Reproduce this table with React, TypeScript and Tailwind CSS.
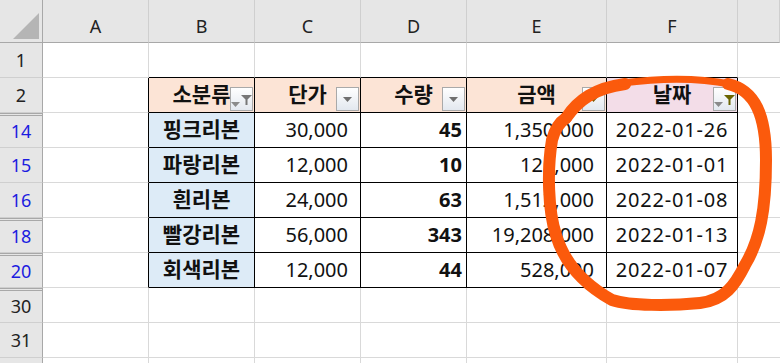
import React from "react";

type Row = { n: string; blue?: boolean; gapAbove?: boolean; data?: string[] };

const rows: Row[] = [
  { n: "1" },
  { n: "2" },
  { n: "14", blue: true, gapAbove: true, data: ["핑크리본", "30,000", "45", "1,350,000", "2022-01-26"] },
  { n: "15", blue: true, data: ["파랑리본", "12,000", "10", "120,000", "2022-01-01"] },
  { n: "16", blue: true, data: ["흰리본", "24,000", "63", "1,512,000", "2022-01-08"] },
  { n: "18", blue: true, gapAbove: true, data: ["빨강리본", "56,000", "343", "19,208,000", "2022-01-13"] },
  { n: "20", blue: true, gapAbove: true, data: ["회색리본", "12,000", "44", "528,000", "2022-01-07"] },
  { n: "30", gapAbove: true },
  { n: "31" },
  { n: "" },
];

const letters = ["A", "B", "C", "D", "E", "F", ""];

function Triangle({ color }: { color: string }) {
  return (
    <svg width="9" height="5" viewBox="0 0 9 5">
      <path d="M0 0H9L4.5 5Z" fill={color} />
    </svg>
  );
}

function Funnel({ color }: { color: string }) {
  return (
    <svg width="11" height="10" viewBox="0 0 11 10">
      <path d="M0 0H11L6.5 4.5V10H4.5V4.5Z" fill={color} />
    </svg>
  );
}

function FilterButton({ kind }: { kind: "plain" | "sorted" | "filtered" | "filteredGrey" }) {
  return (
    <div className="absolute right-[1px] bottom-[1px] flex h-[24px] w-[23px] items-center justify-center border border-[#a9a9a9] bg-gradient-to-b from-white to-[#e3e8ef]">
      {kind === "plain" && <Triangle color="#6f6f6f" />}
      {kind === "sorted" && <Triangle color="#7a5a00" />}
      {kind === "filtered" && (
        <div className="flex items-end gap-[1px] pt-[2px]">
          <div className="mb-[-2px]">
            <Triangle color="#8a8a8a" />
          </div>
          <Funnel color="#6a6400" />
        </div>
      )}
      {kind === "filteredGrey" && (
        <div className="flex items-end gap-[1px] pt-[2px]">
          <div className="mb-[-2px]">
            <Triangle color="#8a8a8a" />
          </div>
          <Funnel color="#777777" />
        </div>
      )}
    </div>
  );
}

const headers: { label: string; bg: string; btn: "plain" | "sorted" | "filtered" | "filteredGrey" }[] = [
  { label: "소분류", bg: "bg-[#fce4d6]", btn: "filteredGrey" },
  { label: "단가", bg: "bg-[#fce4d6]", btn: "plain" },
  { label: "수량", bg: "bg-[#fce4d6]", btn: "plain" },
  { label: "금액", bg: "bg-[#fce4d6]", btn: "sorted" },
  { label: "날짜", bg: "bg-[#f3dde8]", btn: "filtered" },
];

export default function App() {
  return (
    <div
      className="relative h-[363px] w-[780px] overflow-hidden bg-white text-[#111]"
      style={{ fontFamily: '"Noto Sans", "Noto Sans CJK KR", sans-serif' }}
    >
      <div className="grid grid-cols-[43px_106px_106px_106px_106px_140px_131px_1fr] grid-rows-[43px_repeat(10,35px)]">
        {/* corner */}
        <div className="flex items-end justify-end border-b border-r border-[#a8a8a8] bg-[#e6e6e6] pb-[3px] pr-[3px]">
          <svg width="26" height="26" viewBox="0 0 26 26">
            <path d="M26 0V26H0Z" fill="#b5b5b5" />
          </svg>
        </div>
        {/* column letters */}
        {letters.map((l, i) => (
          <div
            key={"c" + i}
            className="flex items-center justify-center border-b border-r border-b-[#a8a8a8] border-r-[#cfcfcf] bg-[#e6e6e6] pt-[10px] text-[18px] text-[#222]"
          >
            {l}
          </div>
        ))}

        {rows.map((r, ri) => {
          const inTable = ri >= 1 && ri <= 6;
          const aboveTable = ri === 0;
          const cells: React.ReactNode[] = [];
          cells.push(
            <div
              key={"h" + ri}
              className={`flex items-center justify-center border-r border-r-[#a8a8a8] bg-[#e6e6e6] text-[18px] ${
                r.blue ? "text-[#1c1ce0]" : "text-[#222]"
              } ${
                r.gapAbove
                  ? "border-t-[3px] border-b border-double border-t-[#a8a8a8] border-b-[#cfcfcf]"
                  : "border-b border-b-[#cfcfcf]"
              }`}
            >
              {r.n}
            </div>
          );
          // column A
          cells.push(
            <div
              key={"a" + ri}
              className={`border-b border-r border-b-[#d9d9d9] ${inTable ? "border-r-black" : "border-r-[#d9d9d9]"}`}
            />
          );
          if (ri === 1) {
            headers.forEach((h, hi) => {
              cells.push(
                <div
                  key={"t" + hi}
                  className={`relative flex items-center justify-center border-b border-r border-black ${h.bg} text-[21px] font-bold`}
                >
                  {h.label}
                  <FilterButton kind={h.btn} />
                </div>
              );
            });
          } else if (r.data) {
            const d = r.data;
            cells.push(
              <div key="b" className="flex items-center justify-center border-b border-r border-black bg-[#ddebf7] text-[21px] font-bold">
                {d[0]}
              </div>,
              <div key="c" className="flex items-center justify-end border-b border-r border-black pr-[12px] text-[20px]">
                {d[1]}
              </div>,
              <div key="d" className="flex items-center justify-end border-b border-r border-black pr-[4px] text-[20px] font-bold">
                {d[2]}
              </div>,
              <div key="e" className="flex items-center justify-end border-b border-r border-black pr-[12px] text-[20px]">
                {d[3]}
              </div>,
              <div key="f" className="flex items-center justify-center border-b border-r border-black text-[20px] tracking-[0.8px]">
                {d[4]}
              </div>
            );
          } else {
            for (let c = 0; c < 5; c++) {
              cells.push(
                <div
                  key={"x" + c}
                  className={`border-b border-r border-[#d9d9d9] ${aboveTable ? "border-b-black" : ""}`}
                />
              );
            }
          }
          // column G
          cells.push(<div key={"g" + ri} className="border-b border-[#d9d9d9]" />);
          return <React.Fragment key={ri}>{cells}</React.Fragment>;
        })}
      </div>

      {/* hand-drawn marker circle around the date column */}
      <svg className="pointer-events-none absolute left-0 top-0" width="780" height="363" viewBox="0 0 780 363">
        <g fill="none" stroke="#fb5a0c" strokeLinecap="round" strokeLinejoin="round">
          <path strokeWidth="12" d="M566 118 C578 100, 595 88, 625 84" />
          <path strokeWidth="7" d="M622 83 C660 78, 700 78, 730 84" />
          <path
            strokeWidth="12"
            d="M728 84 C755 90, 766 115, 766 160 C766 210, 760 240, 745 265 C735 285, 725 300, 700 303 C670 306, 630 306, 612 300 C585 285, 565 265, 556 235 C548 210, 547 170, 552 140 C555 128, 560 122, 566 118"
          />
        </g>
      </svg>
    </div>
  );
}
